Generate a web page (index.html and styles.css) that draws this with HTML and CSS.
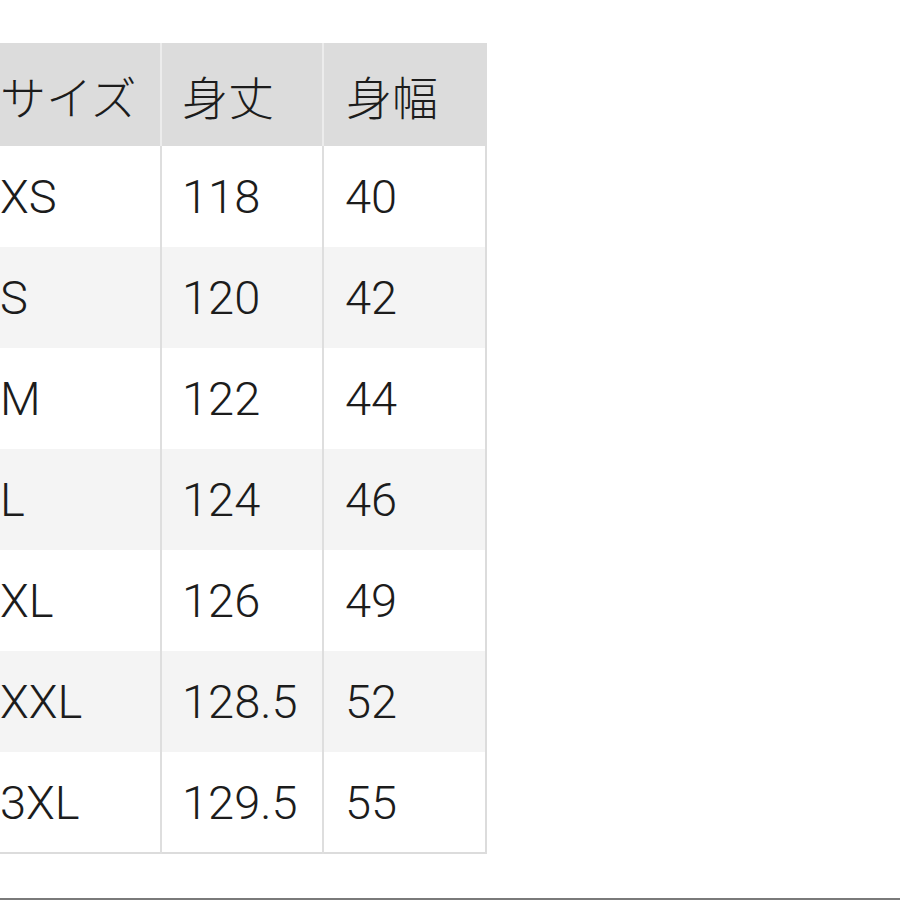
FILE: index.html
```html
<!DOCTYPE html>
<html lang="ja">
<head>
<meta charset="utf-8">
<link rel="stylesheet" href="styles.css">
</head>
<body>
<main class="page">
  <table class="size-table">
    <colgroup>
      <col class="col-size">
      <col class="col-length">
      <col class="col-width">
    </colgroup>
    <thead>
      <tr><th>サイズ</th><th>身丈</th><th>身幅</th></tr>
    </thead>
    <tbody>
      <tr><td>XS</td><td>118</td><td>40</td></tr>
      <tr><td>S</td><td>120</td><td>42</td></tr>
      <tr><td>M</td><td>122</td><td>44</td></tr>
      <tr><td>L</td><td>124</td><td>46</td></tr>
      <tr><td>XL</td><td>126</td><td>49</td></tr>
      <tr><td>XXL</td><td>128.5</td><td>52</td></tr>
      <tr><td>3XL</td><td>129.5</td><td>55</td></tr>
    </tbody>
  </table>
  <div class="bottom-rule"></div>
</main>
</body>
</html>
```
FILE: styles.css
```css
html, body {
  margin: 0;
  padding: 0;
  background: #ffffff;
}
.page {
  width: 900px;
  height: 900px;
  overflow: hidden;
  display: flex;
  flex-direction: column;
  align-items: flex-start;
}
.size-table {
  margin-top: 43px;
  margin-left: -23px;
  width: 510px;
  table-layout: fixed;
  border-collapse: collapse;
  font-family: "Roboto", "Liberation Sans", "Noto Sans CJK JP", sans-serif;
  font-weight: 300;
  font-size: 47px;
  color: #1c1c1c;
  border-right: 2px solid #dcdcdc;
  border-bottom: 2px solid #dcdcdc;
}
.col-size { width: 183px; }
.col-length { width: 162px; }
.col-width { width: 163px; }
.size-table th,
.size-table td {
  box-sizing: border-box;
  text-align: left;
  vertical-align: middle;
  white-space: nowrap;
  overflow: visible;
}
.size-table th {
  height: 103px;
  padding: 0 0 0 20px;
  background: #dcdcdc;
  border-left: 2px solid #ececec;
  font-family: "Noto Sans CJK JP", sans-serif;
  font-weight: 300;
  font-size: 46px;
}
.size-table td {
  height: 101px;
  padding: 0 0 0 20px;
  border-left: 2px solid #dedede;
  font-weight: 300;
}
.size-table td:nth-child(3) {
  padding-left: 21px;
}
.size-table th:nth-child(3) {
  padding-left: 22px;
}
.size-table th:first-child,
.size-table td:first-child {
  padding-left: 21px;
}
.size-table tbody tr:nth-child(even) td {
  background: #f4f4f4;
}
.bottom-rule {
  margin-top: auto;
  align-self: stretch;
  height: 2px;
  background: #7a7a7a;
}
```
